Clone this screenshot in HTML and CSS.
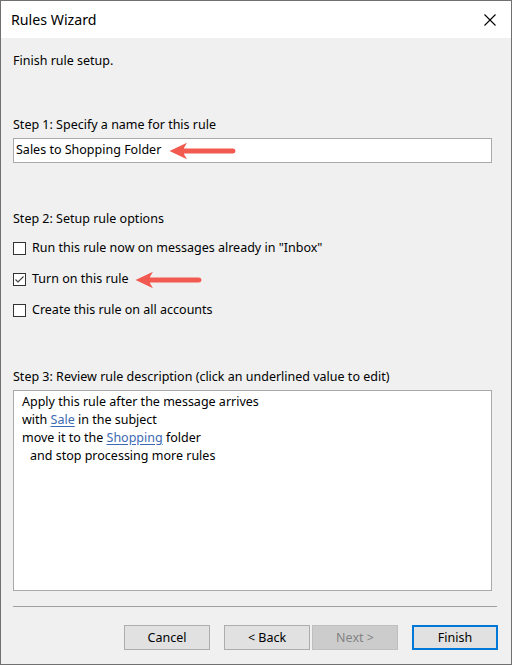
FILE: index.html
```html
<!DOCTYPE html>
<html>
<head>
<meta charset="utf-8">
<link rel="stylesheet" href="styles.css">
</head>
<body>
<div class="window">
  <div class="titlebar">
    <span class="title">Rules Wizard</span>
    <svg class="close" width="12" height="12" viewBox="0 0 12 12"><path d="M0.5 0.5 L11.5 11.5 M11.5 0.5 L0.5 11.5" stroke="#000" stroke-width="1.1" fill="none"/></svg>
  </div>
  <div class="content">
    <div class="intro">Finish rule setup.</div>
    <div class="label step1">Step 1: Specify a name for this rule</div>
    <div class="textbox">Sales to Shopping Folder</div>
    <div class="label step2">Step 2: Setup rule options</div>
    <div class="options">
      <div class="option"><span class="checkbox"></span><span>Run this rule now on messages already in "Inbox"</span></div>
      <div class="option"><span class="checkbox"><svg width="11" height="11" viewBox="0 0 11 11"><path d="M1.5 5.5 L4 8 L9.5 2.5" stroke="#444" stroke-width="1.2" fill="none"/></svg></span><span>Turn on this rule</span></div>
      <div class="option"><span class="checkbox"></span><span>Create this rule on all accounts</span></div>
    </div>
    <div class="label step3">Step 3: Review rule description (click an underlined value to edit)</div>
    <div class="desc">
      <div>Apply this rule after the message arrives</div>
      <div>with <span class="link">Sale</span> in the subject</div>
      <div>move it to the <span class="link">Shopping</span> folder</div>
      <div class="indent">and stop processing more rules</div>
    </div>
    <div class="separator"></div>
    <div class="buttons">
      <button class="btn">Cancel</button>
      <div class="nav">
        <button class="btn">&lt; Back</button>
        <button class="btn disabled">Next &gt;</button>
      </div>
      <button class="btn primary">Finish</button>
    </div>
  </div>
  <svg class="arrow arrow1" width="70" height="18" viewBox="0 0 70 18"><path d="M1.5 9 L19 0.8 Q15.5 6.3 16 6.5 L65 6.5 A2.5 2.5 0 0 1 65 11.5 L16 11.5 Q15.5 11.7 19 17.2 Z" fill="#f25a4f"/></svg>
  <svg class="arrow arrow2" width="70" height="18" viewBox="0 0 70 18"><path d="M1.5 9 L19 0.8 Q15.5 6.3 16 6.5 L65 6.5 A2.5 2.5 0 0 1 65 11.5 L16 11.5 Q15.5 11.7 19 17.2 Z" fill="#f25a4f"/></svg>
</div>
</body>
</html>
```
FILE: styles.css
```css
* { box-sizing: border-box; }
html, body { margin: 0; padding: 0; background: #f0f0f0; }
body { font-family: "Noto Sans", "Open Sans", sans-serif; font-size: 12.5px; color: #000; }
.window {
  position: relative;
  width: 512px;
  height: 665px;
  border: 1px solid #707070;
  background: #f0f0f0;
  overflow: hidden;
  display: flex;
  flex-direction: column;
}
.titlebar {
  height: 37px;
  background: #fff;
  display: flex;
  align-items: center;
  justify-content: space-between;
  padding: 0 15px 0 10px;
  flex: none;
}
.title { font-size: 14.2px; line-height: 20px; }
.close { display: block; }
.content {
  padding: 0 13px 0 12px;
  display: flex;
  flex-direction: column;
}
.intro, .label, .option, .desc div, .textbox { line-height: 18px; white-space: nowrap; }
.intro { margin-top: 14px; }
.step1 { margin-top: 46px; }
.textbox {
  margin-top: 4px;
  width: 479px;
  height: 25px;
  background: #fff;
  border: 1px solid #a9a9a9;
  padding: 2px 2px;
}
.step2 { margin-top: 47px; }
.options { margin-top: 11px; display: flex; flex-direction: column; gap: 13px; }
.option { display: flex; align-items: center; gap: 6px; height: 18px; }
.checkbox {
  width: 13px; height: 13px;
  border: 1px solid #333;
  background: #fff;
  display: flex; align-items: center; justify-content: center;
  flex: none;
}
.checkbox svg { display: block; }
.step3 { margin-top: 49px; }
.desc {
  margin-top: 4px;
  width: 479px;
  height: 201px;
  background: #fff;
  border: 1px solid #a9a9a9;
  padding: 2px 8px;
}
.desc .indent { padding-left: 8px; }
.link { color: #3b69b2; text-decoration: underline; text-underline-offset: 2px; }
.separator {
  margin-top: 15px;
  width: 484px;
  height: 1px;
  background: #a0a0a0;
}
.buttons {
  margin-top: 18px;
  display: flex;
  justify-content: flex-end;
  gap: 14px;
}
.nav { display: flex; gap: 2px; }
.btn {
  width: 86px;
  height: 25px;
  background: #e1e1e1;
  border: 1px solid #adadad;
  font-family: inherit;
  font-size: 12.5px;
  color: #000;
  padding: 0;
}
.btn.disabled { background: #cccccc; border-color: #bfbfbf; color: #838383; }
.btn.primary { border: 2px solid #0078d7; }
.arrow { position: absolute; }
.arrow1 { left: 167px; top: 141px; }
.arrow2 { left: 133px; top: 270px; }
```
